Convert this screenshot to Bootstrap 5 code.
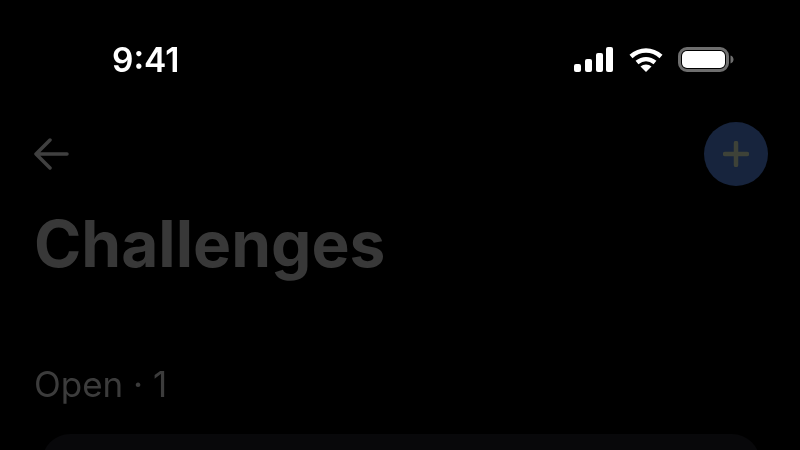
<!DOCTYPE html>
<html lang="en">
<head>
  <meta charset="UTF-8" />
  <meta name="viewport" content="width=device-width, initial-scale=1.0"/>
  <title>Challenges</title>
  <link href="https://cdn.jsdelivr.net/npm/bootstrap@5.3.0/dist/css/bootstrap.min.css" rel="stylesheet" />
  <style>
    body {
      background-color: #000;
      font-family: Inter, "Liberation Sans", sans-serif;
    }

    .screen {
      height: 450px;
      filter: blur(0.5px);
    }

    .status-bar {
      height: 100px;
      padding: 40px 66px 0 112px;
    }

    .status-time {
      color: #fff;
      font-size: 33.5px;
      font-weight: 600;
      line-height: 40px;
    }

    .status-icons {
      gap: 15.5px;
      margin-top: 7px;
    }

    .top-row {
      height: 64px;
      margin-top: 22px;
      padding: 0 32px 0 34px;
    }

    .add-btn {
      width: 64px;
      height: 64px;
      background-color: #17243d;
    }

    .page-title {
      color: #383838;
      font-size: 64px;
      font-weight: 700;
      line-height: 76px;
      margin: 20px 0 0 34px;
    }

    .section-label {
      color: #3c3c3c;
      font-size: 35px;
      line-height: 40px;
      margin: 82px 0 0 34px;
    }

    .challenge-box {
      height: 120px;
      margin: 30px 40px 0 42px;
      background-color: #08080a;
      border-radius: 28px;
    }
  </style>
</head>
<body>
<div class="screen overflow-hidden">
  <div class="status-bar d-flex justify-content-between align-items-start">
    <span class="status-time">9:41</span>
    <div class="d-flex align-items-center status-icons">
      <svg width="39" height="25" viewBox="0 0 39 25" fill="#fff">
        <rect x="0" y="17" width="7" height="8" rx="2"/>
        <rect x="11" y="12" width="7" height="13" rx="2"/>
        <rect x="22" y="6" width="7" height="19" rx="2"/>
        <rect x="32" y="0" width="7" height="25" rx="2"/>
      </svg>
      <svg width="34" height="24" viewBox="0 0 34 24" fill="none" stroke="#fff" stroke-width="4.5">
        <path d="M2 8.5C11 .5 23 .5 32 8.5"/>
        <path d="M8 14.5C13.500 10 20.500 10 26 14.500"/>
        <path d="M17 24l-5.500-5.500C14.500 15.800 19.500 15.800 22.500 18.500z" fill="#fff" stroke="none"/>
      </svg>
      <svg width="56" height="25" viewBox="0 0 56 25" fill="none">
        <rect x="1.500" y="1.500" width="48" height="22" rx="7.500" stroke="#6e6e6e" stroke-width="3"/>
        <rect x="4" y="4" width="43" height="17" rx="5" fill="#fff"/>
        <path d="M52.500 8.500c2 .6 3 2.200 3 4s-1 3.400-3 4z" fill="#6e6e6e"/>
      </svg>
    </div>
  </div>

  <div class="top-row d-flex justify-content-between align-items-center">
    <svg width="36" height="32" viewBox="0 0 36 32" fill="none" stroke="#404040" stroke-width="3.500" stroke-linecap="round" stroke-linejoin="round">
      <path d="M33 16H3M16 2L2 16l14 14"/>
    </svg>
    <div class="add-btn rounded-circle d-flex align-items-center justify-content-center">
      <svg width="26" height="26" viewBox="0 0 26 26" fill="none" stroke="#3e4238" stroke-width="4.500" stroke-linecap="round">
        <path d="M13 2v22M2 13h22"/>
      </svg>
    </div>
  </div>

  <div class="page-title">Challenges</div>
  <div class="section-label">Open · 1</div>
  <div class="challenge-box"></div>
</div>

  <script src="https://cdn.jsdelivr.net/npm/bootstrap@5.3.0/dist/js/bootstrap.bundle.min.js"></script>
</body>
</html>
